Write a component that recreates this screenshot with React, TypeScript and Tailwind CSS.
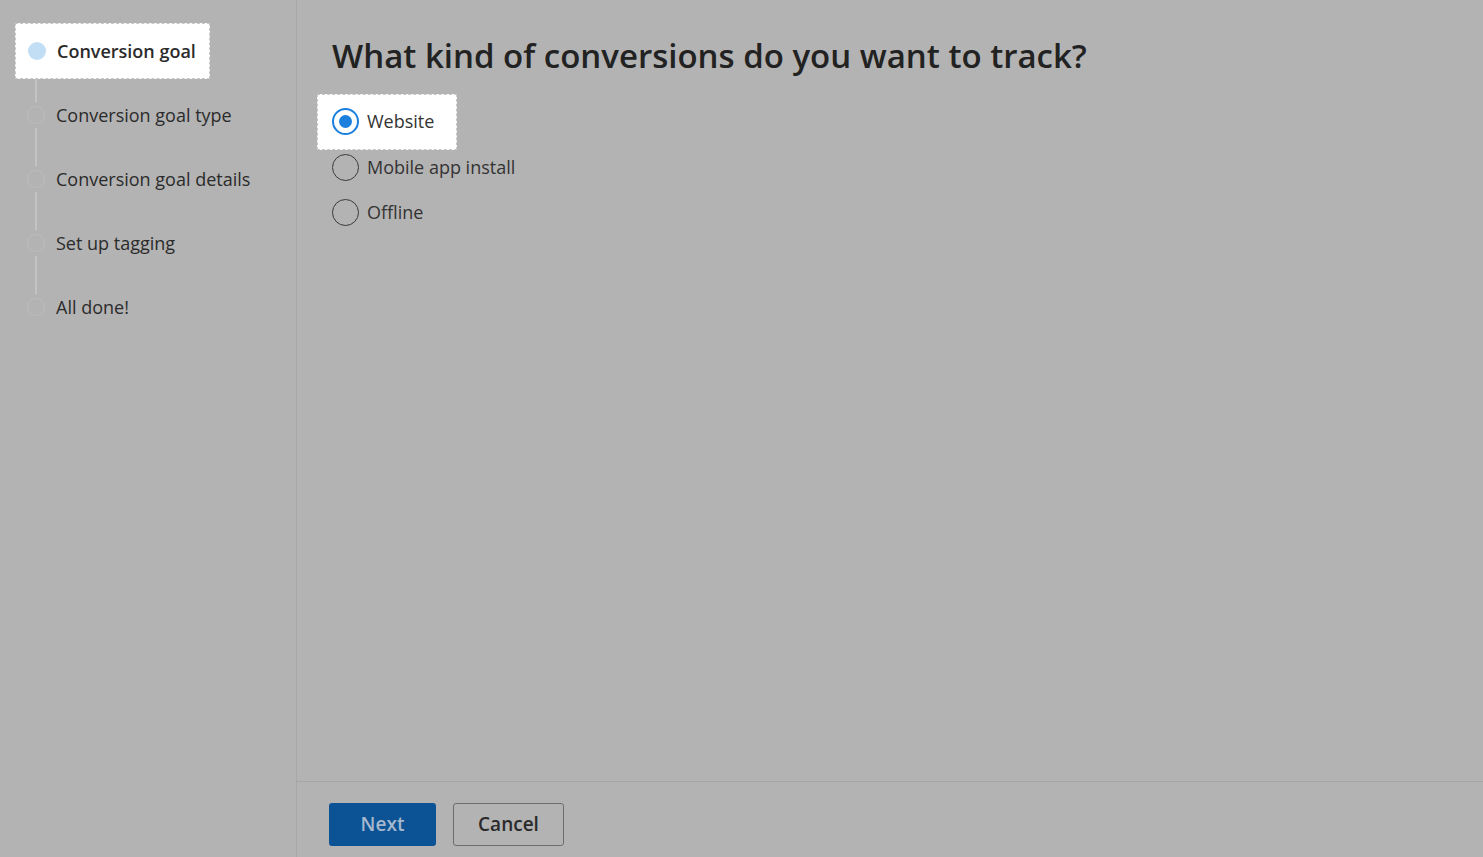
const steps = [
  "Conversion goal",
  "Conversion goal type",
  "Conversion goal details",
  "Set up tagging",
  "All done!",
];

const options = ["Website", "Mobile app install", "Offline"];

function Step({ label, index }: { label: string; index: number }) {
  const active = index === 0;
  const last = index === steps.length - 1;
  return (
    <div className="relative h-16">
      {!last && (
        <div className="absolute left-[35px] top-[37px] h-[38px] w-[2px] bg-[#c4c4c4]" />
      )}
      <div
        className={`absolute left-[15px] top-[-4px] flex h-14 items-center pl-3 pr-4 ${
          active ? "w-[195px] border border-dashed border-[#c8c8c8] bg-white" : ""
        }`}
      >
        <span
          className={`h-[18px] w-[18px] shrink-0 rounded-full ${
            active ? "bg-[#c2def5]" : "border border-[#bdbdbd]"
          }`}
        />
        <span
          className={`ml-[11px] whitespace-nowrap text-[18px] text-[#2b2b2b] ${
            active ? "font-semibold" : ""
          }`}
        >
          {label}
        </span>
      </div>
    </div>
  );
}

function Radio({ label, checked }: { label: string; checked?: boolean }) {
  return (
    <div className="relative flex h-[45.5px] items-center pl-[15px]">
      {checked && (
        <div className="absolute bottom-[-5px] left-0 top-[-5px] w-[140px] border border-dashed border-[#c8c8c8] bg-white" />
      )}
      <span
        className={`relative flex h-[27px] w-[27px] items-center justify-center rounded-full ${
          checked ? "border-2 border-[#1a7fdd]" : "border-[1.5px] border-[#3a3a3a]"
        }`}
      >
        {checked && <span className="h-[13px] w-[13px] rounded-full bg-[#1a7fdd]" />}
      </span>
      <span className="relative ml-[8px] whitespace-nowrap text-[18px] text-[#333]">{label}</span>
    </div>
  );
}

export default function App() {
  return (
    <div
      className="flex h-[857px] w-full bg-[#b3b3b3]"
      style={{ fontFamily: '"Open Sans", "Noto Sans", sans-serif' }}
    >
      <aside className="w-[297px] shrink-0 border-r border-[#a8a8a8] pt-[27px]">
        {steps.map((s, i) => (
          <Step key={s} label={s} index={i} />
        ))}
      </aside>
      <main className="flex flex-1 flex-col">
        <div className="flex-1 pl-[20px] pt-[34px]">
          <h1 className="pl-[15px] text-[33px] font-semibold leading-[44px] text-[#222]">
            What kind of conversions do you want to track?
          </h1>
          <div className="mt-[21px] flex flex-col">
            {options.map((o, i) => (
              <Radio key={o} label={o} checked={i === 0} />
            ))}
          </div>
        </div>
        <div className="flex h-[76px] items-center gap-4 border-t border-[#a6a6a6] pb-[1px] pl-[32px] pt-[10px]">
          <button className="h-[43px] w-[107px] rounded-[3px] bg-[#0b5394] text-[19px] font-semibold text-[#a5b8cd]">
            Next
          </button>
          <button className="ml-[1px] h-[43px] w-[111px] rounded-[3px] border border-[#6d6d6d] text-[19px] font-semibold text-[#2a2a2a]">
            Cancel
          </button>
        </div>
      </main>
    </div>
  );
}
